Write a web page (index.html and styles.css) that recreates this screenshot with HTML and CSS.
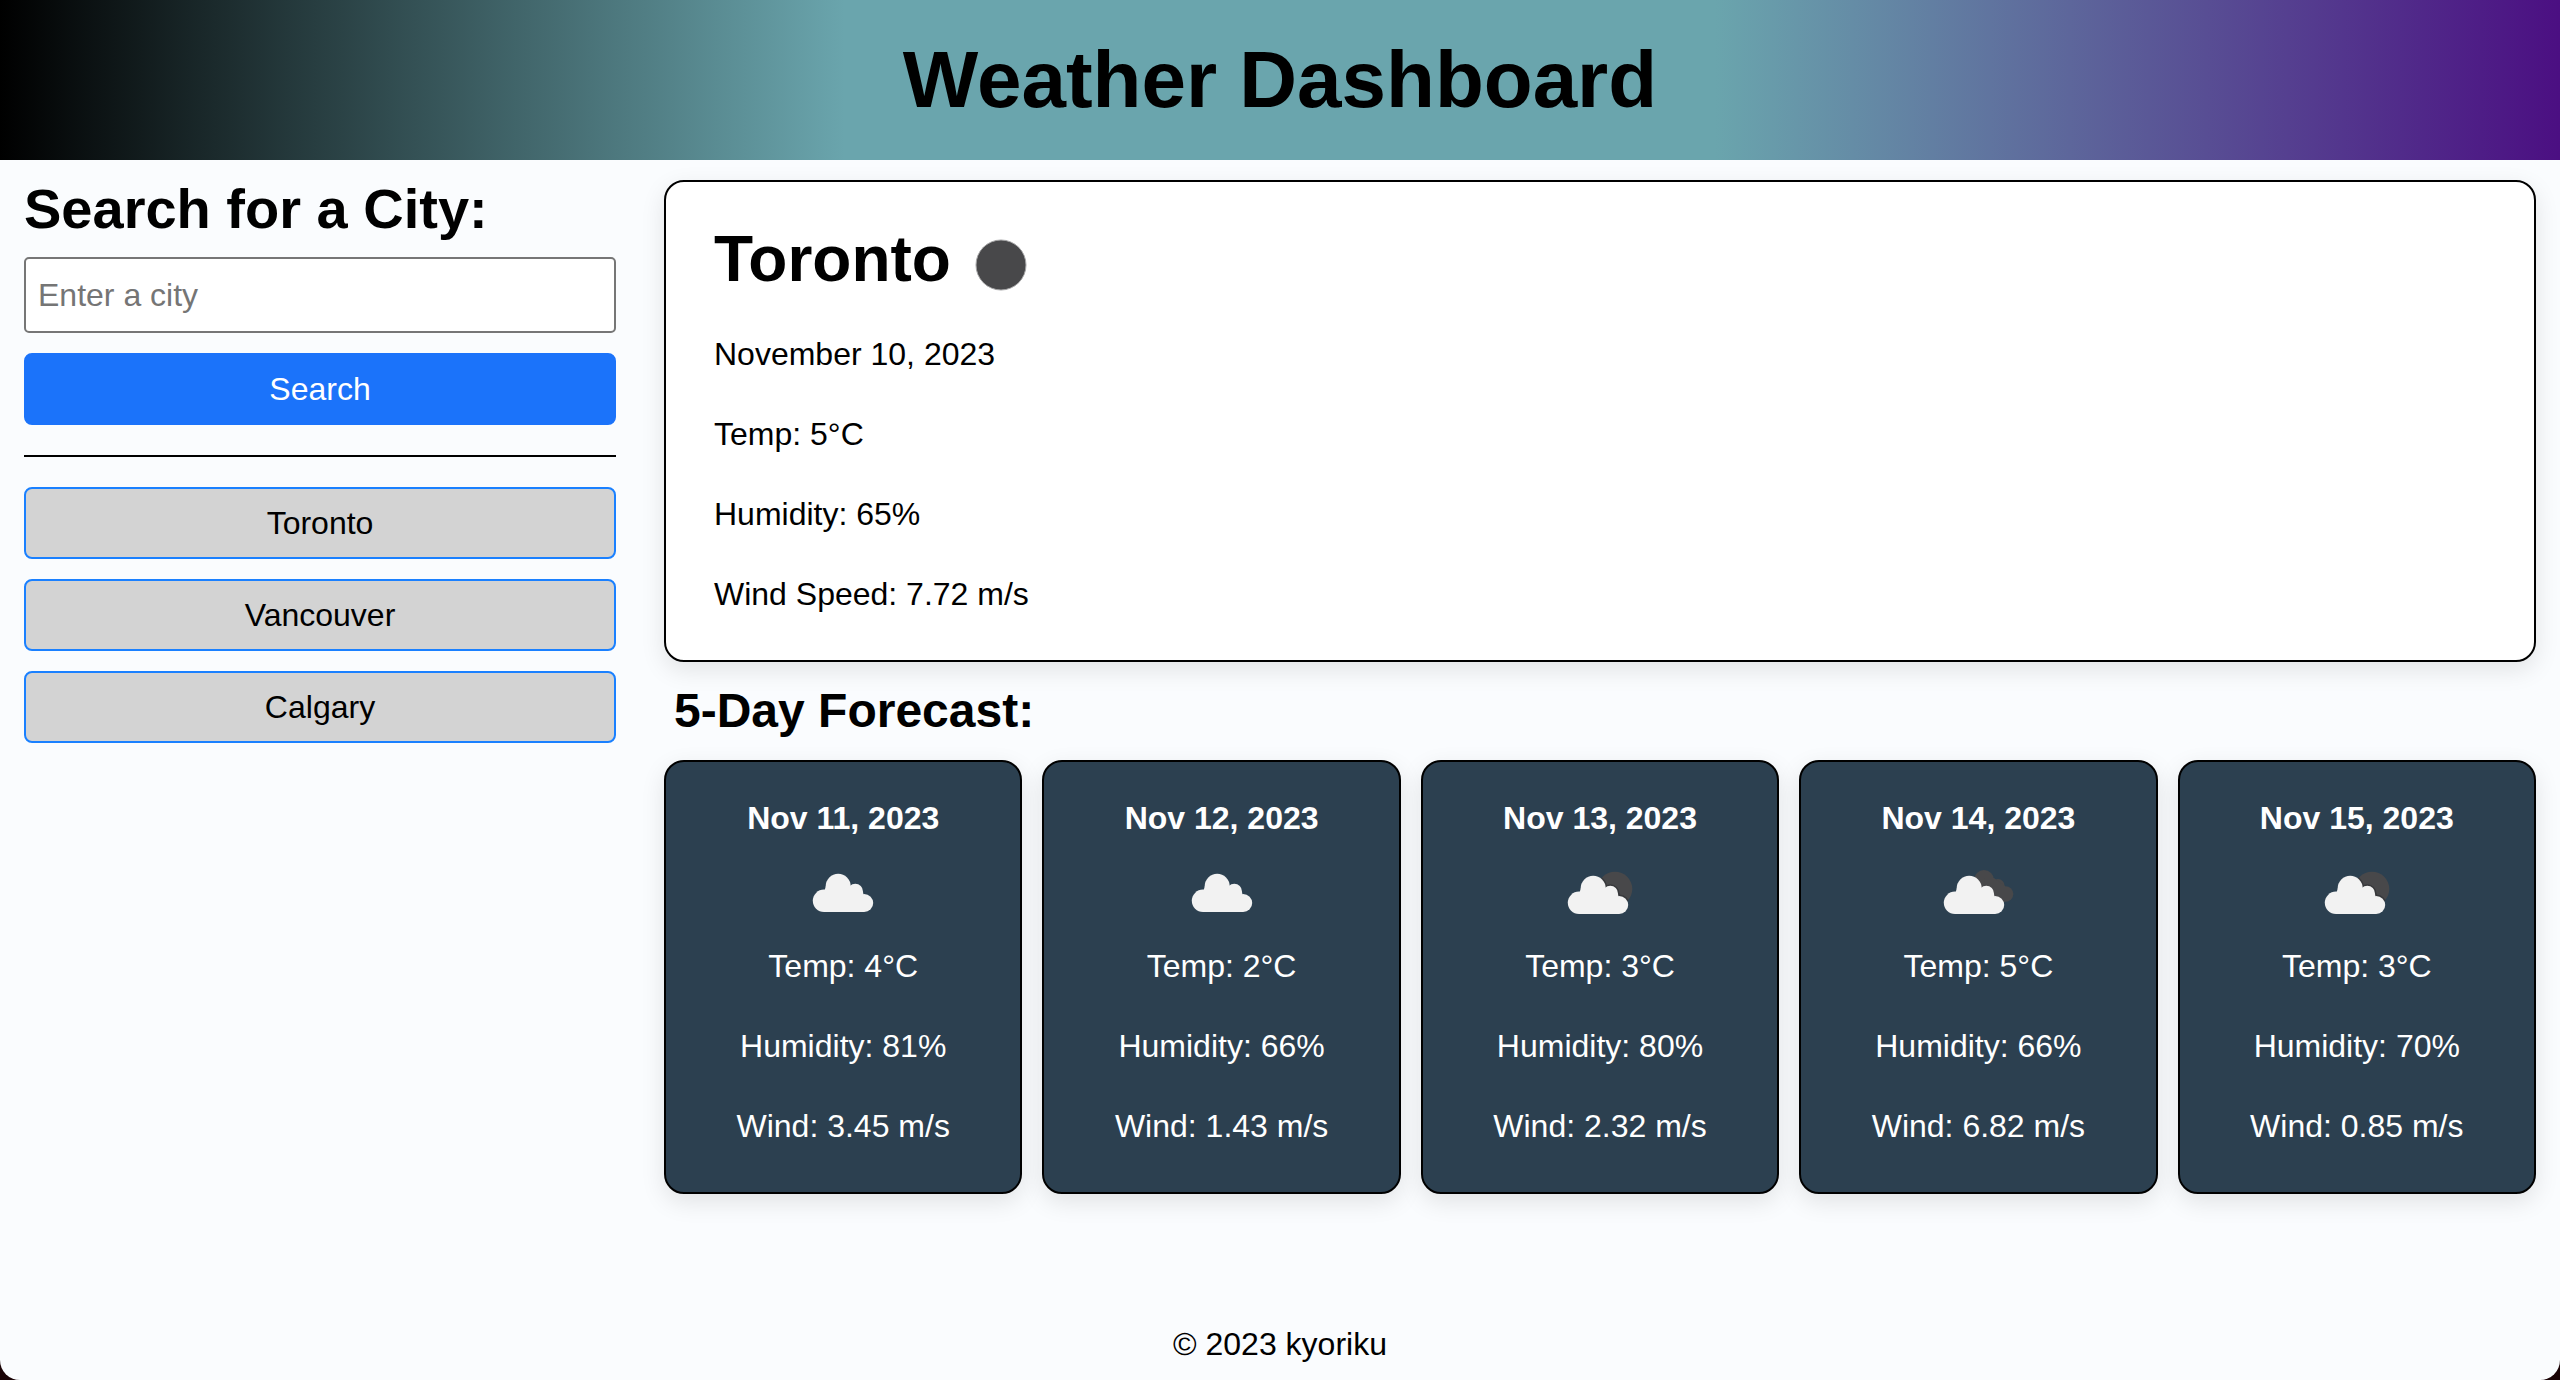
FILE: index.html
```html
<!DOCTYPE html>
<html lang="en">
<head>
<meta charset="utf-8">
<meta name="viewport" content="width=device-width, initial-scale=1">
<title>Weather Dashboard</title>
<link rel="stylesheet" href="styles.css">
</head>
<body>
<svg class="sprite" aria-hidden="true">
  <defs>
    <g id="cloud">
      <circle cx="31" cy="58.800" r="11.200"/>
      <circle cx="45.200" cy="44.300" r="12.500"/>
      <circle cx="62.300" cy="49.500" r="7.700"/>
      <circle cx="71.200" cy="61" r="9"/>
      <path d="M31 70V50l2-6h24l5 0 8 6 1 5v15Z"/>
    </g>
    <clipPath id="sun-clip"><circle cx="65" cy="47" r="17.300"/></clipPath>
    <g id="dark-cloud">
      <circle cx="56" cy="38" r="10"/>
      <circle cx="70" cy="43.500" r="6.500"/>
      <circle cx="77.500" cy="52" r="7.800"/>
      <path d="M56 36h10l11 8v16H60Z"/>
    </g>
    <symbol id="overcast" viewBox="0 0 100 100"><use href="#cloud" fill="#f2f2f2"/></symbol>
    <symbol id="few-clouds" viewBox="0 0 100 100">
      <circle cx="65" cy="47" r="17.300" fill="#48484a"/>
      <g clip-path="url(#sun-clip)"><use href="#cloud" x="-2" y="2" fill="none" stroke="#37383b" stroke-width="3"/></g>
      <use href="#cloud" x="-2" y="2" fill="#f2f2f2"/>
    </symbol>
    <symbol id="broken-clouds" viewBox="0 0 100 100">
      <use href="#dark-cloud" fill="#48484a"/>
      <use href="#cloud" x="-4" y="2" fill="#f2f2f2"/>
    </symbol>
  </defs>
</svg>
<div class="page">
  <header class="header"><h1 class="title">Weather Dashboard</h1></header>
  <main class="main">
    <aside class="sidebar">
      <form class="search">
        <h2 class="search-title"><label for="city">Search for a City:</label></h2>
        <input class="city-input" id="city" type="text" placeholder="Enter a city">
        <button class="button primary" type="button">Search</button>
      </form>
      <hr class="divider">
      <div class="history">
        <button class="button" type="button">Toronto</button>
        <button class="button" type="button">Vancouver</button>
        <button class="button" type="button">Calgary</button>
      </div>
    </aside>
    <div class="results">
      <section class="current">
        <h2 class="city">Toronto <svg class="moon" viewBox="0 0 52 64" aria-hidden="true"><circle cx="26" cy="38" r="25" fill="#48484a" stroke="#a5a5a6" stroke-width="1"/></svg></h2>
        <p>November 10, 2023</p>
        <p>Temp: 5°C</p>
        <p>Humidity: 65%</p>
        <p>Wind Speed: 7.72 m/s</p>
      </section>
      <h2 class="forecast-title">5-Day Forecast:</h2>
      <div class="forecast">
        <article class="day"><h3>Nov 11, 2023</h3><svg class="icon"><use href="#overcast"/></svg><p>Temp: 4°C</p><p>Humidity: 81%</p><p>Wind: 3.45 m/s</p></article>
        <article class="day"><h3>Nov 12, 2023</h3><svg class="icon"><use href="#overcast"/></svg><p>Temp: 2°C</p><p>Humidity: 66%</p><p>Wind: 1.43 m/s</p></article>
        <article class="day"><h3>Nov 13, 2023</h3><svg class="icon"><use href="#few-clouds"/></svg><p>Temp: 3°C</p><p>Humidity: 80%</p><p>Wind: 2.32 m/s</p></article>
        <article class="day"><h3>Nov 14, 2023</h3><svg class="icon"><use href="#broken-clouds"/></svg><p>Temp: 5°C</p><p>Humidity: 66%</p><p>Wind: 6.82 m/s</p></article>
        <article class="day"><h3>Nov 15, 2023</h3><svg class="icon"><use href="#few-clouds"/></svg><p>Temp: 3°C</p><p>Humidity: 70%</p><p>Wind: 0.85 m/s</p></article>
      </div>
    </div>
  </main>
  <footer class="footer">© 2023 kyoriku</footer>
</div>
</body>
</html>
```
FILE: styles.css
```css
* { box-sizing: border-box; margin: 0; }
html { background: #1a0406; }
body {
  font-family: "Liberation Sans", Arial, sans-serif;
  font-size: 32px;
  line-height: 48px;
  color: #000;
}
.sprite { position: absolute; width: 0; height: 0; }
.page {
  min-height: 100vh;
  display: flex;
  flex-direction: column;
  background: #fafcfe;
  border-radius: 0 0 20px 20px;
}
.header {
  padding: 32px;
  text-align: center;
  background: linear-gradient(to right, #000, #6aa5ad 33%, #6aa5ad 67%, #4b0f82);
}
.title { font-size: 80px; line-height: 96px; }
.main {
  flex: 1;
  display: grid;
  grid-template-columns: 592fr 1872fr;
  gap: 48px;
  align-items: start;
  padding: 20px 24px;
}
.search { display: flex; flex-direction: column; gap: 20px; }
.search-title { font-size: 56px; line-height: 57px; }
.city-input {
  width: 100%;
  height: 76px;
  padding: 0 12px;
  font: inherit;
  background: #fff;
  border: 2px solid #767676;
  border-radius: 5px;
}
.city-input::placeholder { color: #757575; opacity: 1; }
.button {
  width: 100%;
  height: 72px;
  padding: 0;
  font: inherit;
  color: #000;
  background: #d3d3d3;
  border: 2px solid #1a80ff;
  border-radius: 8px;
}
.primary { color: #fff; background: #1b73fa; border-color: #1b73fa; }
.divider { height: 2px; margin: 30px 0; background: #000; border: 0; }
.history { display: flex; flex-direction: column; gap: 20px; }
.current, .day {
  border: 2px solid #000;
  border-radius: 20px;
  box-shadow: 0 8px 24px rgba(0, 0, 0, .1);
}
.current {
  display: flex;
  flex-direction: column;
  gap: 32px;
  padding: 40px 48px 42px;
  background: #fff;
}
.city {
  display: flex;
  align-items: center;
  gap: 24px;
  padding-bottom: 2px;
  font-size: 64px;
  line-height: 74px;
}
.moon { width: 52px; height: 64px; }
.forecast-title { padding: 20px 10px; font-size: 48px; line-height: 58px; }
.forecast { display: grid; grid-template-columns: repeat(5, 1fr); gap: 20px; }
.day {
  padding: 32px 20px 42px;
  text-align: center;
  color: #fff;
  background: #2c4050;
}
.day h3 { font-size: 32px; }
.day p + p { margin-top: 32px; }
.icon { display: block; width: 100px; height: 100px; margin: 0 auto; }
.footer { padding: 0 24px 12px; text-align: center; }
```
